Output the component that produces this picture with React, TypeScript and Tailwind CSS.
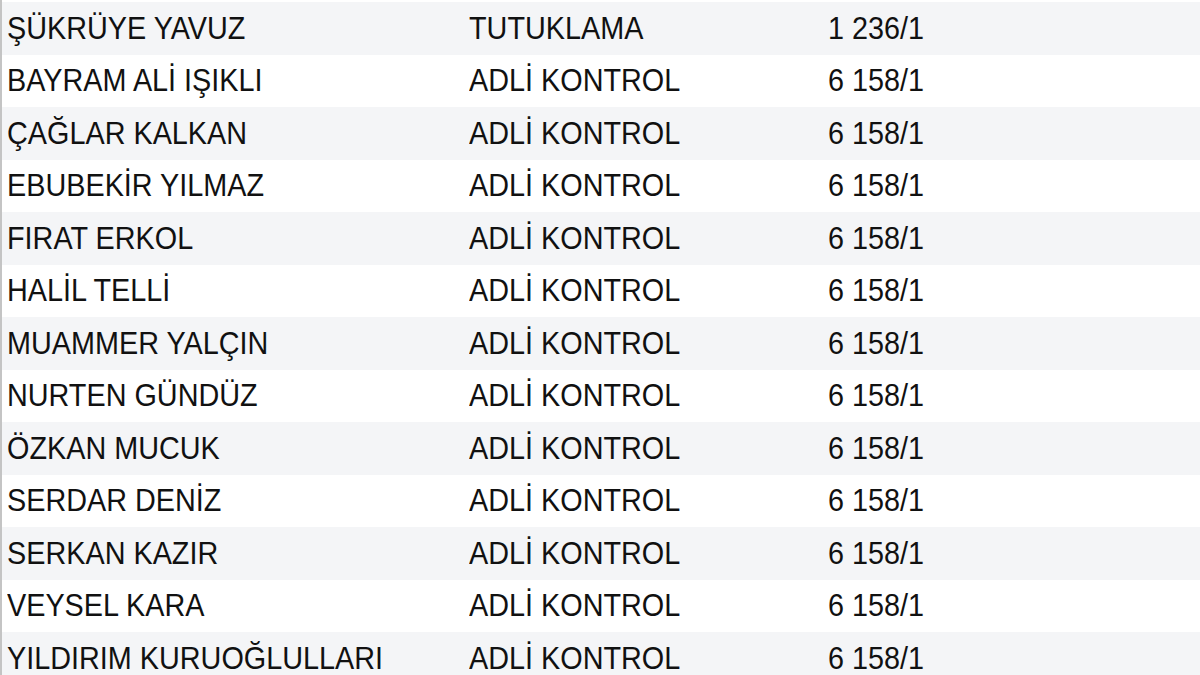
import React from 'react';

const rows: [string, string, string][] = [
  ['ŞÜKRÜYE YAVUZ', 'TUTUKLAMA', '1 236/1'],
  ['BAYRAM ALİ IŞIKLI', 'ADLİ KONTROL', '6 158/1'],
  ['ÇAĞLAR KALKAN', 'ADLİ KONTROL', '6 158/1'],
  ['EBUBEKİR YILMAZ', 'ADLİ KONTROL', '6 158/1'],
  ['FIRAT ERKOL', 'ADLİ KONTROL', '6 158/1'],
  ['HALİL TELLİ', 'ADLİ KONTROL', '6 158/1'],
  ['MUAMMER YALÇIN', 'ADLİ KONTROL', '6 158/1'],
  ['NURTEN GÜNDÜZ', 'ADLİ KONTROL', '6 158/1'],
  ['ÖZKAN MUCUK', 'ADLİ KONTROL', '6 158/1'],
  ['SERDAR DENİZ', 'ADLİ KONTROL', '6 158/1'],
  ['SERKAN KAZIR', 'ADLİ KONTROL', '6 158/1'],
  ['VEYSEL KARA', 'ADLİ KONTROL', '6 158/1'],
  ['YILDIRIM KURUOĞLULLARI', 'ADLİ KONTROL', '6 158/1'],
];

export default function App() {
  return (
    <div className="w-[1200px] h-[675px] overflow-hidden bg-white">
      <div className="h-full border-l-2 border-[#c4c4c4] pt-[2px] font-['Liberation_Sans',Arial,sans-serif] text-[28.8px] text-[#111]">
        {rows.map(([name, status, code], i) => (
          <div
            key={name}
            className={`flex items-center h-[52.5px] pl-[5px] ${i % 2 === 0 ? 'bg-[#f4f5f7]' : 'bg-white'}`}
          >
            <div className="w-[462px] whitespace-nowrap">
              <span className="inline-block scale-y-[1.08]">{name}</span>
            </div>
            <div className="w-[359px] whitespace-nowrap">
              <span className="inline-block scale-y-[1.08]">{status}</span>
            </div>
            <div className="flex-1 whitespace-nowrap">
              <span className="inline-block scale-y-[1.08]">{code}</span>
            </div>
          </div>
        ))}
      </div>
    </div>
  );
}
